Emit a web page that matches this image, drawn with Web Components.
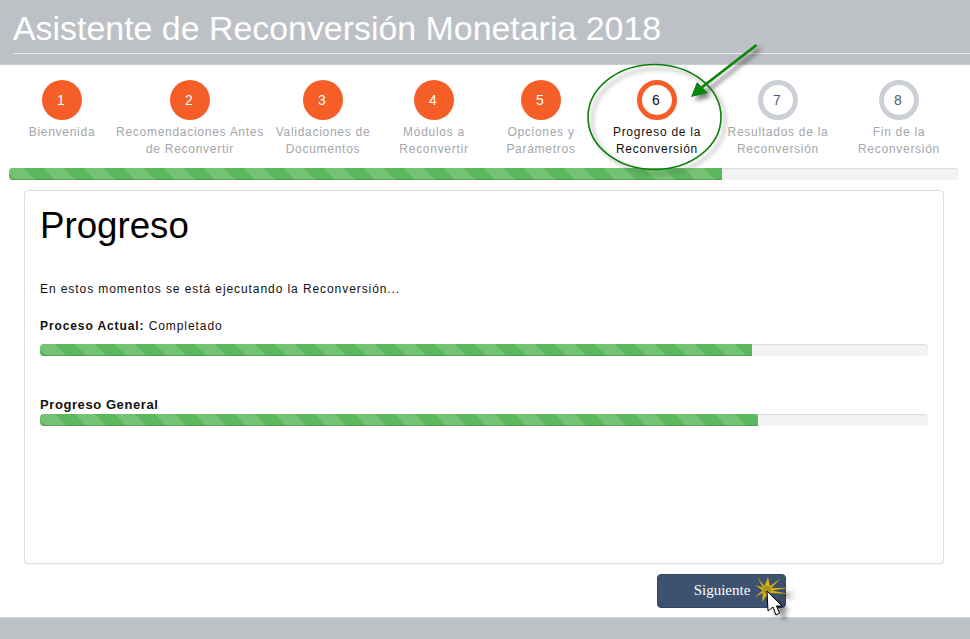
<!DOCTYPE html>
<html lang="es">
<head>
<meta charset="utf-8">
<title>Asistente de Reconversión Monetaria 2018</title>
<style>
  html, body { margin: 0; height: 100%; background: #fff; }
  body { font-family: "Liberation Sans", Arial, sans-serif; overflow: hidden; }
</style>
</head>
<body>
<wizard-app></wizard-app>

<script>
class WizardHeader extends HTMLElement {
  constructor() {
    super();
    this.attachShadow({ mode: "open" });
    this.shadowRoot.innerHTML = `
      <style>
        :host { display: block; height: 65px; box-sizing: border-box; padding: 9px 0 0 13px; background: #bdc1c5; border-bottom: 1px solid #c9cccf; }
        h1 { margin: 0; height: 45px; box-sizing: border-box; border-bottom: 1px solid #e6e8ea; font: 400 33.9px/38px "Liberation Sans", Arial, sans-serif; color: #fff; }
      </style>
      <h1><slot></slot></h1>
    `;
  }
}
customElements.define("wizard-header", WizardHeader);

class WizardStep extends HTMLElement {
  constructor() {
    super();
    this.attachShadow({ mode: "open" });
    this.shadowRoot.innerHTML = `
      <style>
        :host { display: flex; flex-direction: column; align-items: center; flex: none; font: 12px/17px "Liberation Sans", Arial, sans-serif; letter-spacing: .72px; color: #a3a6ab; text-align: center; }
        .dot { flex: none; width: 40px; height: 40px; box-sizing: border-box; padding-right: 2px; border-radius: 50%; background: #f55f27; color: #fff; font-size: 14px; letter-spacing: 0; display: flex; align-items: center; justify-content: center; margin-bottom: 4px; }
        :host([state="current"]) { color: #111; }
        :host([state="current"]) .dot { background: #fff; border: 5px solid #f55f27; color: #111; }
        :host([state="todo"]) .dot { background: #fff; border: 5px solid #ccd0d6; color: #4c5a78; }
      </style>
      <div class="dot"></div>
      <div><slot></slot></div>
    `;
  }

  connectedCallback() {
    this.shadowRoot.querySelector(".dot").textContent = this.getAttribute("num");
    this.style.width = this.getAttribute("w") + "px";
  }
}
customElements.define("wizard-step", WizardStep);

class StripedBar extends HTMLElement {
  constructor() {
    super();
    this.attachShadow({ mode: "open" });
    this.shadowRoot.innerHTML = `
      <style>
        :host { display: block; height: 12px; border-radius: 4px; background: #f3f3f3; box-shadow: inset 0 1px 1px rgba(0,0,0,.1); overflow: hidden; }
        .fill { height: 100%; background-color: #5cb85c; box-shadow: inset 0 -1px 0 rgba(0,0,0,.15);
          background-image: linear-gradient(45deg, rgba(255,255,255,.15) 25%, transparent 25%, transparent 50%, rgba(255,255,255,.15) 50%, rgba(255,255,255,.15) 75%, transparent 75%);
          background-position: -5px 0;
          background-size: 40px 40px; }
      </style>
      <div class="fill"></div>
    `;
  }

  connectedCallback() {
    this.shadowRoot.querySelector(".fill").style.width = this.getAttribute("fill") + "px";
  }
}
customElements.define("striped-bar", StripedBar);

class ProgressCard extends HTMLElement {
  constructor() {
    super();
    this.attachShadow({ mode: "open" });
    this.shadowRoot.innerHTML = `
      <style>
        :host { display: block; box-sizing: border-box; height: 374px; margin: 10px 26px 0 24px; padding: 15px 15px 0 15px; background: #fff; border: 1px solid #ddd; border-radius: 4px; box-shadow: 0 1px 1px rgba(0,0,0,.05); font: 12px/17px "Liberation Sans", Arial, sans-serif; letter-spacing: .92px; color: #111; }
        h2 { margin: 0 0 35px; font: 400 36.7px/40px "Liberation Sans", Arial, sans-serif; letter-spacing: 0; color: #000; }
        p { margin: 0; }
        .now { margin-top: 20px; }
        .now b { letter-spacing: .9px; }
        .general { margin-top: 40px; font-size: 13px; letter-spacing: .58px; }
        striped-bar { margin-top: 9px; }
        .general + striped-bar { margin-top: 1px; }
        b { font-weight: 700; }
      </style>
      <h2>Progreso</h2>
      <p>En estos momentos se está ejecutando la Reconversión...</p>
      <p class="now"><b>Proceso Actual:</b> Completado</p>
      <striped-bar fill="712"></striped-bar>
      <p class="general"><b>Progreso General</b></p>
      <striped-bar fill="718"></striped-bar>
    `;
  }
}
customElements.define("progress-card", ProgressCard);

class WizardButton extends HTMLElement {
  constructor() {
    super();
    this.attachShadow({ mode: "open" });
    this.shadowRoot.innerHTML = `
      <style>
        :host { display: flex; width: 129px; height: 34px; box-sizing: border-box; align-items: center; justify-content: center; border-radius: 4px; background: #3c5270; border: 1px solid #324661; color: #fff; font: 15px "Liberation Serif", "Times New Roman", serif; padding: 0 0 2px 1px; }
      </style>
      <slot></slot>
    `;
  }
}
customElements.define("wizard-button", WizardButton);

class WizardApp extends HTMLElement {
  constructor() {
    super();
    this.attachShadow({ mode: "open" });
    this.shadowRoot.innerHTML = `
      <style>
        :host { display: flex; flex-direction: column; height: 639px; position: relative; }
        .steps { display: flex; padding: 15px 0 0 9px; height: 88px; box-sizing: border-box; margin-bottom: 15px; }
        .top-bar { margin: 0 11px 0 9px; }
        .actions { display: flex; justify-content: flex-start; margin: 10px 0 0 657px; }
        .foot { margin-top: auto; height: 22px; background: #bdc1c5; border-top: 1px solid #d4d6d9; box-sizing: border-box; }
        .notes { position: absolute; left: 0; top: 0; pointer-events: none; }
      </style>
      <wizard-header>Asistente de Reconversión Monetaria 2018</wizard-header>
      <div class="steps">
        <wizard-step num="1" w="106">Bienvenida</wizard-step>
        <wizard-step num="2" w="150">Recomendaciones Antes de Reconvertir</wizard-step>
        <wizard-step num="3" w="116">Validaciones de Documentos</wizard-step>
        <wizard-step num="4" w="106">Módulos a Reconvertir</wizard-step>
        <wizard-step num="5" w="108">Opciones y Parámetros</wizard-step>
        <wizard-step num="6" w="124" state="current">Progreso de la Reconversión</wizard-step>
        <wizard-step num="7" w="118" state="todo">Resultados de la Reconversión</wizard-step>
        <wizard-step num="8" w="124" state="todo">Fin de la Reconversión</wizard-step>
      </div>
      <striped-bar class="top-bar" fill="713"></striped-bar>
      <progress-card></progress-card>
      <div class="actions"><wizard-button>Siguiente</wizard-button></div>
      <div class="foot"></div>
      <svg class="notes" width="970" height="639" viewBox="0 0 970 639">
        <defs>
          <filter id="soft" x="-30%" y="-30%" width="160%" height="160%"><feGaussianBlur stdDeviation="2"/></filter>
        </defs>
        <!-- shadows first -->
        <g opacity=".6" filter="url(#soft)" transform="translate(4 4)">
          <ellipse cx="654.5" cy="117" rx="66.5" ry="52.5" fill="none" stroke="#555" stroke-width="1.5"/>
          <path d="M756 45 L702 88" stroke="#333" stroke-width="3" fill="none"/>
          <path d="M691 97 L697 83 L707 93 Z" fill="#333"/>
        </g>
        <ellipse cx="654.5" cy="117" rx="66.5" ry="52.5" fill="none" stroke="#0b800b" stroke-width="1.6"/>
        <path d="M756.5 45 L701 88" stroke="#0b860b" stroke-width="2.8" fill="none"/>
        <path d="M691 97 L697 82 L708 93 Z" fill="#0b860b"/>
        <!-- click spark -->
        <g opacity=".5" filter="url(#soft)" transform="translate(7 5)">
          <path d="M770 588 L789 588 L772 592 L789 594 Z" fill="#222"/>
          <path d="M767 592 L768 612 L773 607 L776 615 L780 613 L777 606 L783 606 Z" fill="#222"/>
        </g>
        <path d="M757 577 L764.5 586 L768 577 L770 586 L780 579 L771.5 588 L789 588 L772 590.5 L789 594 L771 593 L767 595 L762 602 L763 593 L755 597 L762.5 590.5 L755 585 L763 587.5 Z" fill="#dcab12"/>
        <circle cx="767" cy="590" r="4" fill="#a8961f"/>
        <!-- mouse pointer -->
        <path d="M767 591 L768 611 L773 607 L776 615 L779.5 613 L776.5 606 L782 606 Z" fill="#fff" stroke="#000" stroke-width="1"/>
      </svg>
    `;
  }
}
customElements.define("wizard-app", WizardApp);
</script>
</body>
</html>
